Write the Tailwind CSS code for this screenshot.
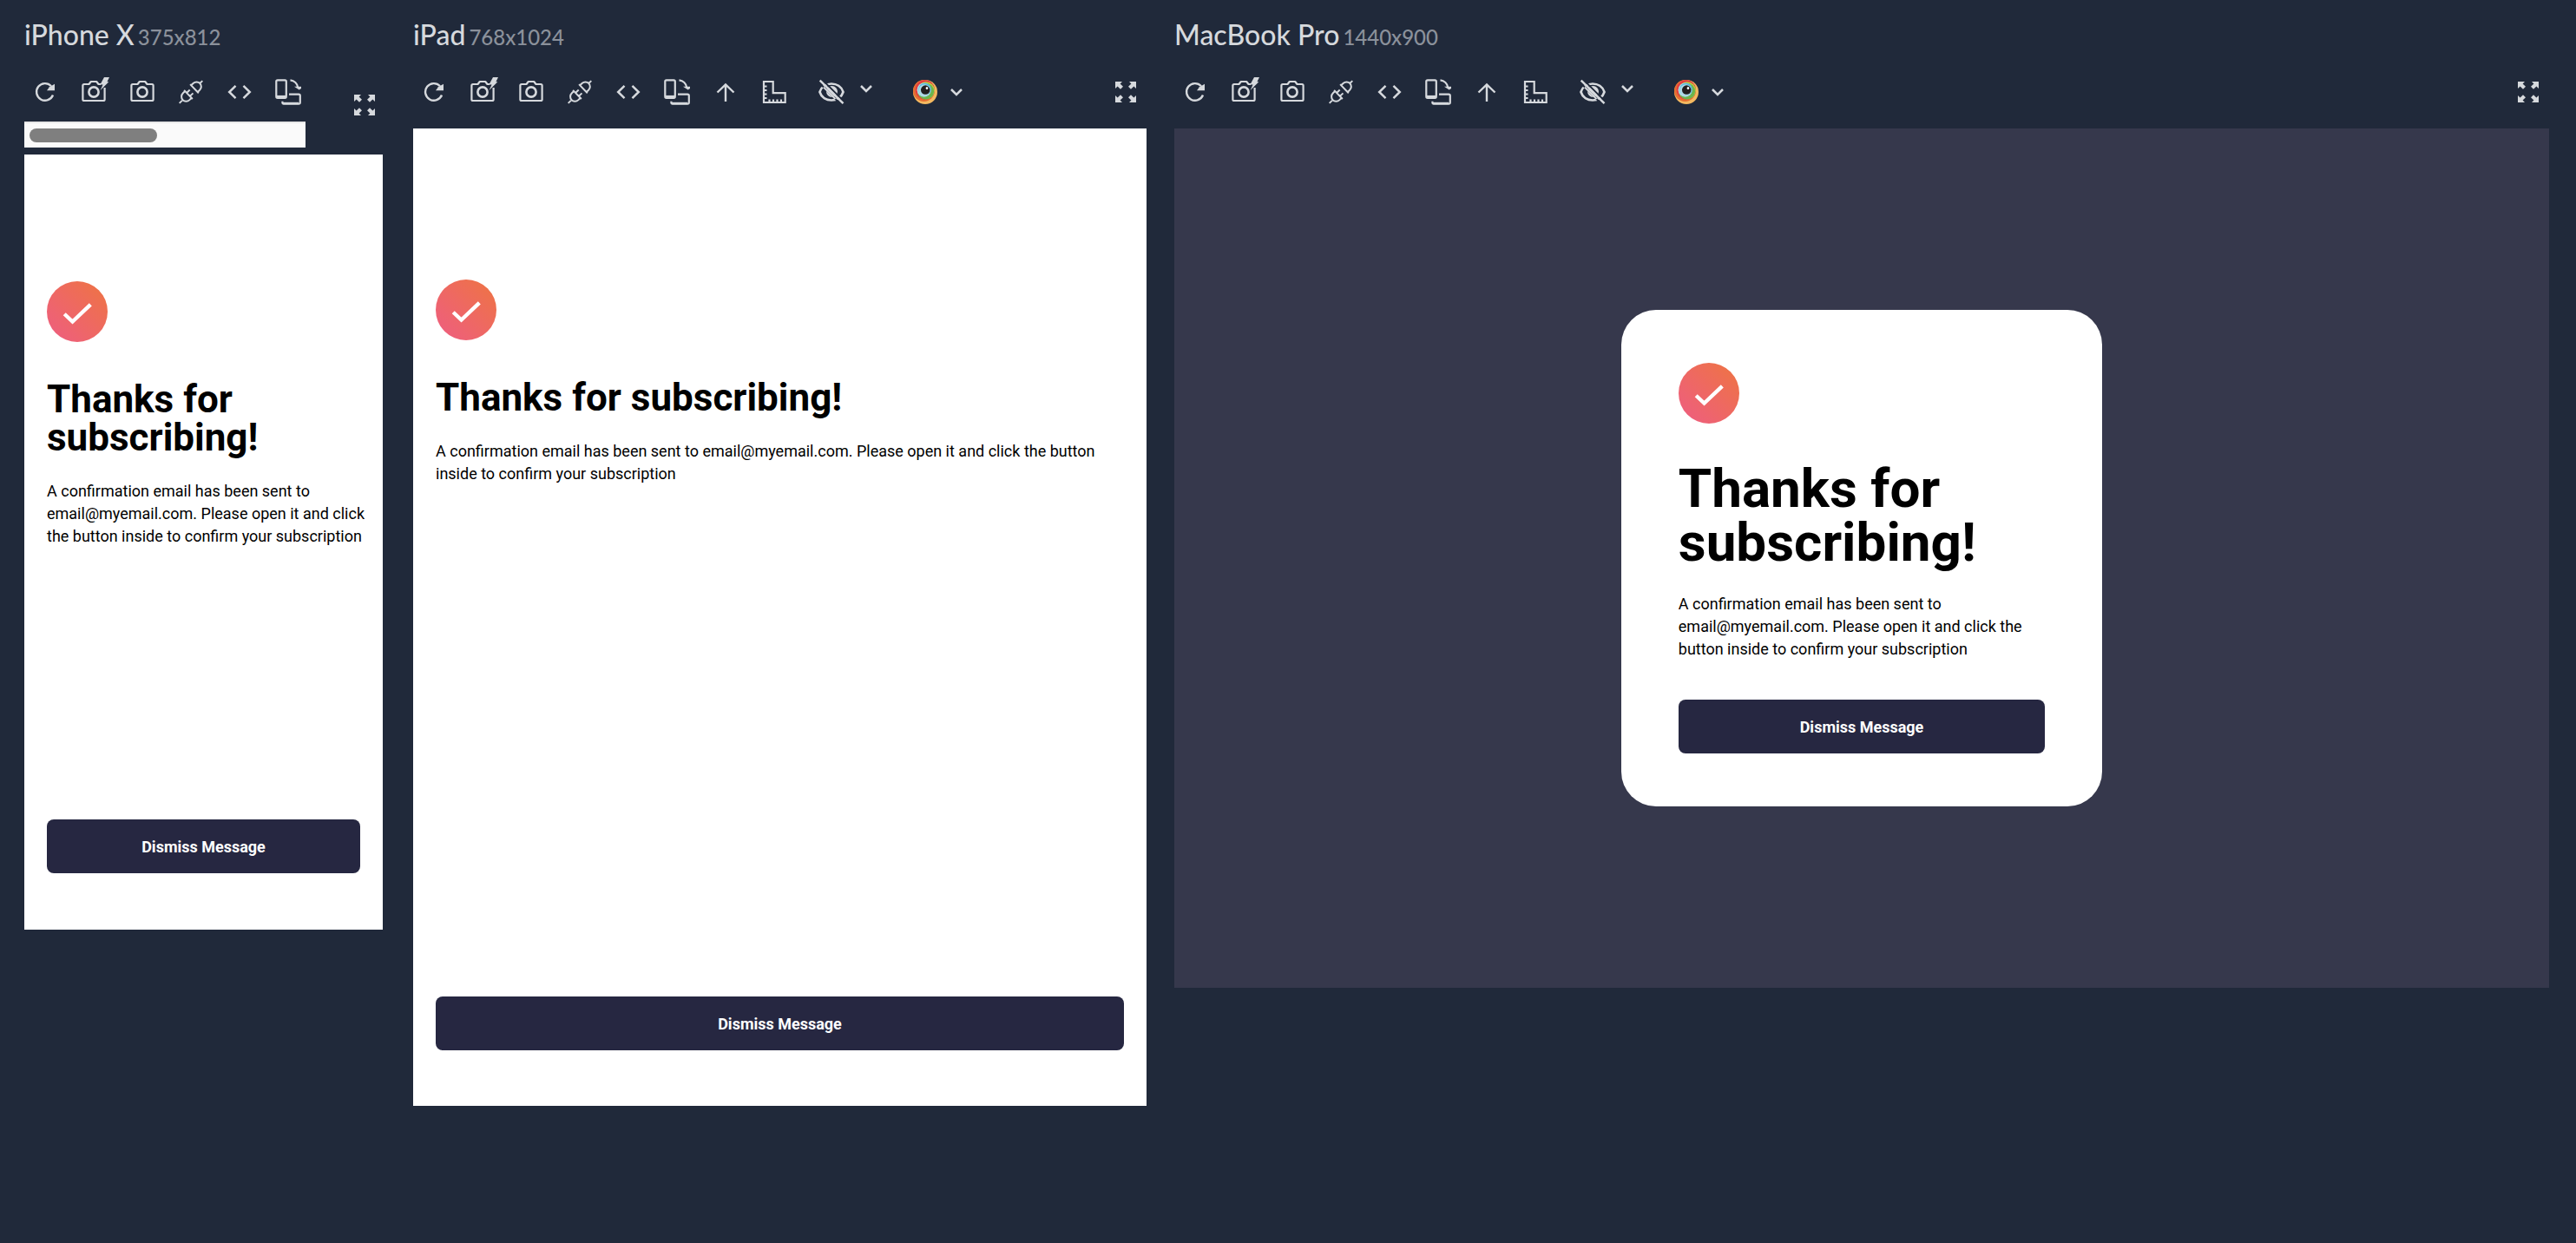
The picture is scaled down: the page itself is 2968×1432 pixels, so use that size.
<!DOCTYPE html>
<html lang="en">
<head>
<meta charset="utf-8">
<meta name="viewport" content="width=device-width, initial-scale=1">
<title>Device preview</title>
<script src="https://cdn.jsdelivr.net/npm/@tailwindcss/browser@4"></script>
</head>
<body class="min-h-screen bg-[#20293a] font-['Lato',sans-serif] text-[#d6d9dd]">

<!-- Shared icon symbols -->
<svg class="absolute size-0" aria-hidden="true">
  <symbol id="refresh" viewBox="0 0 32 32"><path d="M25 19.5A9.8 9.8 0 1 1 23 9.2" fill="none" stroke="currentColor" stroke-width="2.4"/><path d="M27 6.800v7.400h-9l3-4z" fill="currentColor"/></symbol>
  <symbol id="camera" viewBox="0 0 32 32"><g fill="none" stroke="currentColor"><path stroke-width="2.200" stroke-linejoin="round" d="M5 7h5.500l2.300-3h6.400l2.300 3H27a1.600 1.600 0 0 1 1.600 1.600V24.400A1.600 1.600 0 0 1 27 26H5a1.600 1.600 0 0 1-1.600-1.600V8.600A1.600 1.600 0 0 1 5 7z"/><circle cx="16" cy="16" r="5.600" stroke-width="2.600"/></g></symbol>
  <symbol id="camera-flash" viewBox="0 0 32 32" overflow="visible"><g fill="none" stroke="currentColor"><path stroke-width="2.200" stroke-linejoin="round" d="M24 7h-2.500l-2.300-3h-6.400l-2.300 3H5a1.600 1.600 0 0 0-1.600 1.600V24.400A1.600 1.600 0 0 0 5 26H27a1.600 1.600 0 0 0 1.600-1.600V11"/><circle cx="16" cy="16" r="5.600" stroke-width="2.600"/></g><path fill="currentColor" d="M28-1h6l-2.600 5.200h2L23.600 14l3-6.400h-3.200z"/></symbol>
  <symbol id="plug" viewBox="0 0 32 32" overflow="visible"><g transform="translate(16 16) rotate(-44)" fill="none" stroke="currentColor" stroke-width="2"><path d="M-18.500 0h5M-4.200-7v14M-4.200-5.400h-3.300a5.600 5.400 0 0 0 0 10.800h3.300M-4.200-2.700h5M-4.200 2.700h5M5.500-7v14M5.500-5.400h3.300a5.600 5.400 0 0 1 0 10.800h-3.300M14 0h4.500"/></g></symbol>
  <symbol id="code" viewBox="0 0 32 32"><path d="m11.500 8.800-7.300 7.200 7.300 7.200M20.500 8.800l7.300 7.200-7.300 7.200" fill="none" stroke="currentColor" stroke-width="2.500"/></symbol>
  <symbol id="rotate" viewBox="0 0 32 32"><g fill="none" stroke="currentColor" stroke-width="2.200"><rect x="2.300" y="2.300" width="11.500" height="20.500" rx="1.500"/><path d="M2.300 21.300h11.500" stroke-width="2.800"/><path d="M17 18.600h11.200a1.600 1.600 0 0 1 1.600 1.600v7.800a1.600 1.600 0 0 1-1.600 1.600H11a1.600 1.600 0 0 1-1.600-1.600v-1.300"/><path d="M10 29h18" stroke-width="2.400"/><path d="M18.500 2.400c4.500.4 8 4 8.800 8.600"/></g><path d="M23 9.800h8V12l-2.300 1.600z" fill="currentColor"/></symbol>
  <symbol id="up" viewBox="0 0 32 32"><path d="M16 27V7.500M6.500 16.500 16 7.300l9.500 9.200" fill="none" stroke="currentColor" stroke-width="2.400"/></symbol>
  <symbol id="ruler" viewBox="0 0 32 32"><path d="M4 4h10.700v13.200h14v10.800H4zM4 9.500h3.500M4 14h3.500M4 18.500h3.500M4 23h3.500M10.500 28v-3.600M15 28v-3.600M19.500 28v-3.600M24 28v-3.600" fill="none" stroke="currentColor" stroke-width="2.200"/></symbol>
  <symbol id="eye-off" viewBox="0 0 32 32"><path d="M2.500 16C4.500 9.700 10 6.500 16 6.500S27.500 9.700 29.500 16C27.500 22.300 22 25.500 16 25.500S4.500 22.300 2.500 16z" fill="none" stroke="currentColor" stroke-width="2.700"/><circle cx="16.500" cy="15.500" r="6.500" fill="currentColor"/><path d="M5 8.500 23.500 27M8.500 5 27 23.500" stroke="#20293a" stroke-width="1.800"/><path d="M7 10.500 20.500 24" stroke="currentColor" stroke-width="2"/><path d="M2.700 2.600 29.500 29.200" stroke="currentColor" stroke-width="2.500"/></symbol>
  <symbol id="chevron" viewBox="0 0 16 16"><path d="m2 5 6 6 6-6" fill="none" stroke="currentColor" stroke-width="2.500"/></symbol>
  <symbol id="expand" viewBox="0 0 24 24"><g fill="currentColor"><path d="M0 0h8L5.600 2.400 9 5.800 6 8.800 2.600 5.400 0 8z"/><path d="M24 0v8l-2.600-2.600L18 8.800l-3-3 3.400-3.400L16 0z"/><path d="M24 24h-8l2.400-2.400L15 18.200l3-3 3.400 3.400L24 16z"/><path d="M0 24v-8l2.600 2.600L6 15.200l3 3-3.400 3.400L8 24z"/></g></symbol>
  <symbol id="eyeball" viewBox="0 0 128 128"><circle cx="64" cy="64" r="64" fill="#f4b960"/><circle cx="57" cy="57" r="57" fill="#e66f32"/><circle cx="63" cy="52" r="51" fill="#e43c41"/><circle cx="68" cy="56" r="46" fill="#bdd041"/><circle cx="67" cy="60" r="43" fill="#6db54c"/><circle cx="58" cy="53" r="37" fill="#aedae6"/><circle cx="62" cy="50" r="33" fill="#56b8de"/><circle cx="60" cy="54" r="30" fill="#aedae6"/><circle cx="65" cy="53" r="24" fill="#221f1f"/><ellipse cx="73" cy="43" rx="6" ry="7" fill="#fff"/></symbol>
  <linearGradient id="coral" x1="0" y1="1" x2="1" y2="0"><stop offset=".1" stop-color="#ee5f7c"/><stop offset=".9" stop-color="#ee7248"/></linearGradient>
  <symbol id="done" viewBox="0 0 64 64"><circle cx="32" cy="32" r="32" fill="url(#coral)"/><path d="m18.500 34.500 8.500 8 19-18" fill="none" stroke="#fff" stroke-width="4"/></symbol>
</svg>

<main class="grid grid-cols-[416fr_845fr_1584fr] items-start gap-x-8 pl-7 pr-[31px]">

  <!-- Phone -->
  <section class="min-w-0">
    <h2 class="flex h-[72px] items-baseline gap-1 pt-4 text-[32px] leading-12 font-medium">iPhone X <small class="text-[24px] text-[#8b919b]">375x812</small></h2>
    <div class="mb-2 flex items-center justify-between">
      <div class="w-[78%] overflow-hidden">
        <div class="flex h-[68px] items-center gap-2">
          <button class="grid size-12 shrink-0 place-items-center" aria-label="Reload"><svg class="size-8"><use href="#refresh"/></svg></button>
          <button class="grid size-12 shrink-0 place-items-center" aria-label="Quick screenshot"><svg class="size-8 overflow-visible"><use href="#camera-flash"/></svg></button>
          <button class="grid size-12 shrink-0 place-items-center" aria-label="Full page screenshot"><svg class="size-8"><use href="#camera"/></svg></button>
          <button class="grid size-12 shrink-0 place-items-center" aria-label="Disable event mirroring"><svg class="size-8 overflow-visible"><use href="#plug"/></svg></button>
          <button class="grid size-12 shrink-0 place-items-center" aria-label="Developer tools"><svg class="size-8"><use href="#code"/></svg></button>
          <button class="grid size-12 shrink-0 place-items-center" aria-label="Rotate"><svg class="size-8"><use href="#rotate"/></svg></button>
        </div>
        <div class="h-[30px] border-t-2 border-b border-t-[#e8e8e8] border-b-[#ededed] bg-[#fafafa] px-1.5 pt-1.5">
          <div class="h-4 w-[47%] rounded-full bg-[#7f7f7f]"></div>
        </div>
      </div>
      <button class="grid size-12 shrink-0 place-items-center" aria-label="Expand"><svg class="size-6"><use href="#expand"/></svg></button>
    </div>
    <article class="mr-[3px] flex aspect-[413/893] flex-col bg-white px-[26px] pt-[146px] pb-[65px] font-['Roboto',sans-serif] text-black">
      <svg class="size-[70px] shrink-0" aria-hidden="true"><use href="#done"/></svg>
      <h1 class="mt-11 text-[44px] leading-11 font-bold">Thanks for subscribing!</h1>
      <p class="mt-[27px] text-[18px] leading-[26px] whitespace-nowrap">A confirmation email has been sent to<br>email@myemail.com. Please open it and click<br>the button inside to confirm your subscription</p>
      <button class="mt-auto h-[62px] shrink-0 rounded-lg bg-[#262741] text-[18px] font-bold text-white">Dismiss Message</button>
    </article>
  </section>

  <!-- Tablet -->
  <section class="min-w-0">
    <h2 class="flex h-[72px] items-baseline gap-1 pt-4 text-[32px] leading-12 font-medium">iPad <small class="text-[24px] text-[#8b919b]">768x1024</small></h2>
    <div class="mb-2 flex h-[68px] items-center gap-2">
      <button class="grid size-12 shrink-0 place-items-center" aria-label="Reload"><svg class="size-8"><use href="#refresh"/></svg></button>
      <button class="grid size-12 shrink-0 place-items-center" aria-label="Quick screenshot"><svg class="size-8 overflow-visible"><use href="#camera-flash"/></svg></button>
      <button class="grid size-12 shrink-0 place-items-center" aria-label="Full page screenshot"><svg class="size-8"><use href="#camera"/></svg></button>
      <button class="grid size-12 shrink-0 place-items-center" aria-label="Disable event mirroring"><svg class="size-8 overflow-visible"><use href="#plug"/></svg></button>
      <button class="grid size-12 shrink-0 place-items-center" aria-label="Developer tools"><svg class="size-8"><use href="#code"/></svg></button>
      <button class="grid size-12 shrink-0 place-items-center" aria-label="Rotate"><svg class="size-8"><use href="#rotate"/></svg></button>
      <button class="grid size-12 shrink-0 place-items-center" aria-label="Scroll to top"><svg class="size-8"><use href="#up"/></svg></button>
      <button class="grid size-12 shrink-0 place-items-center" aria-label="Rulers"><svg class="size-8"><use href="#ruler"/></svg></button>
      <button class="ml-[18px] flex shrink-0 items-start gap-4" aria-label="Vision simulation"><svg class="size-8"><use href="#eye-off"/></svg><svg class="mt-1 size-4"><use href="#chevron"/></svg></button>
      <button class="ml-[38px] flex shrink-0 items-center gap-[14px]" aria-label="Open in BrowserStack"><svg class="size-7"><use href="#eyeball"/></svg><svg class="size-4"><use href="#chevron"/></svg></button>
      <button class="ml-auto grid size-12 shrink-0 place-items-center" aria-label="Expand"><svg class="size-6"><use href="#expand"/></svg></button>
    </div>
    <article class="flex aspect-[845/1126] flex-col bg-white px-[26px] pt-[174px] pb-[64px] font-['Roboto',sans-serif] text-black">
      <svg class="size-[70px] shrink-0" aria-hidden="true"><use href="#done"/></svg>
      <h1 class="mt-11 text-[44px] leading-11 font-bold">Thanks for subscribing!</h1>
      <p class="mt-[27px] text-[18px] leading-[26px]">A confirmation email has been sent to email@myemail.com. Please open it and click the button inside to confirm your subscription</p>
      <button class="mt-auto h-[62px] shrink-0 rounded-lg bg-[#262741] text-[18px] font-bold text-white">Dismiss Message</button>
    </article>
  </section>

  <!-- Laptop -->
  <section class="min-w-0">
    <h2 class="flex h-[72px] items-baseline gap-1 pt-4 text-[32px] leading-12 font-medium">MacBook Pro <small class="text-[24px] text-[#8b919b]">1440x900</small></h2>
    <div class="mb-2 flex h-[68px] items-center gap-2">
      <button class="grid size-12 shrink-0 place-items-center" aria-label="Reload"><svg class="size-8"><use href="#refresh"/></svg></button>
      <button class="grid size-12 shrink-0 place-items-center" aria-label="Quick screenshot"><svg class="size-8 overflow-visible"><use href="#camera-flash"/></svg></button>
      <button class="grid size-12 shrink-0 place-items-center" aria-label="Full page screenshot"><svg class="size-8"><use href="#camera"/></svg></button>
      <button class="grid size-12 shrink-0 place-items-center" aria-label="Disable event mirroring"><svg class="size-8 overflow-visible"><use href="#plug"/></svg></button>
      <button class="grid size-12 shrink-0 place-items-center" aria-label="Developer tools"><svg class="size-8"><use href="#code"/></svg></button>
      <button class="grid size-12 shrink-0 place-items-center" aria-label="Rotate"><svg class="size-8"><use href="#rotate"/></svg></button>
      <button class="grid size-12 shrink-0 place-items-center" aria-label="Scroll to top"><svg class="size-8"><use href="#up"/></svg></button>
      <button class="grid size-12 shrink-0 place-items-center" aria-label="Rulers"><svg class="size-8"><use href="#ruler"/></svg></button>
      <button class="ml-[18px] flex shrink-0 items-start gap-4" aria-label="Vision simulation"><svg class="size-8"><use href="#eye-off"/></svg><svg class="mt-1 size-4"><use href="#chevron"/></svg></button>
      <button class="ml-[38px] flex shrink-0 items-center gap-[14px]" aria-label="Open in BrowserStack"><svg class="size-7"><use href="#eyeball"/></svg><svg class="size-4"><use href="#chevron"/></svg></button>
      <button class="ml-auto grid size-12 shrink-0 place-items-center" aria-label="Expand"><svg class="size-6"><use href="#expand"/></svg></button>
    </div>
    <div class="grid aspect-[1584/990] place-items-center bg-[#36384c]">
      <article class="flex w-[35%] flex-col rounded-[40px] bg-white px-[66px] py-[61px] font-['Roboto',sans-serif] text-black">
        <svg class="size-[70px] shrink-0" aria-hidden="true"><use href="#done"/></svg>
        <h1 class="mt-11 text-[62px] leading-[62px] font-bold">Thanks for subscribing!</h1>
        <p class="mt-[27px] text-[18px] leading-[26px]">A confirmation email has been sent to email@myemail.com. Please open it and click the button inside to confirm your subscription</p>
        <button class="mt-[45px] h-[62px] shrink-0 rounded-lg bg-[#262741] text-[18px] font-bold text-white">Dismiss Message</button>
      </article>
    </div>
  </section>
</main>
</body>
</html>
